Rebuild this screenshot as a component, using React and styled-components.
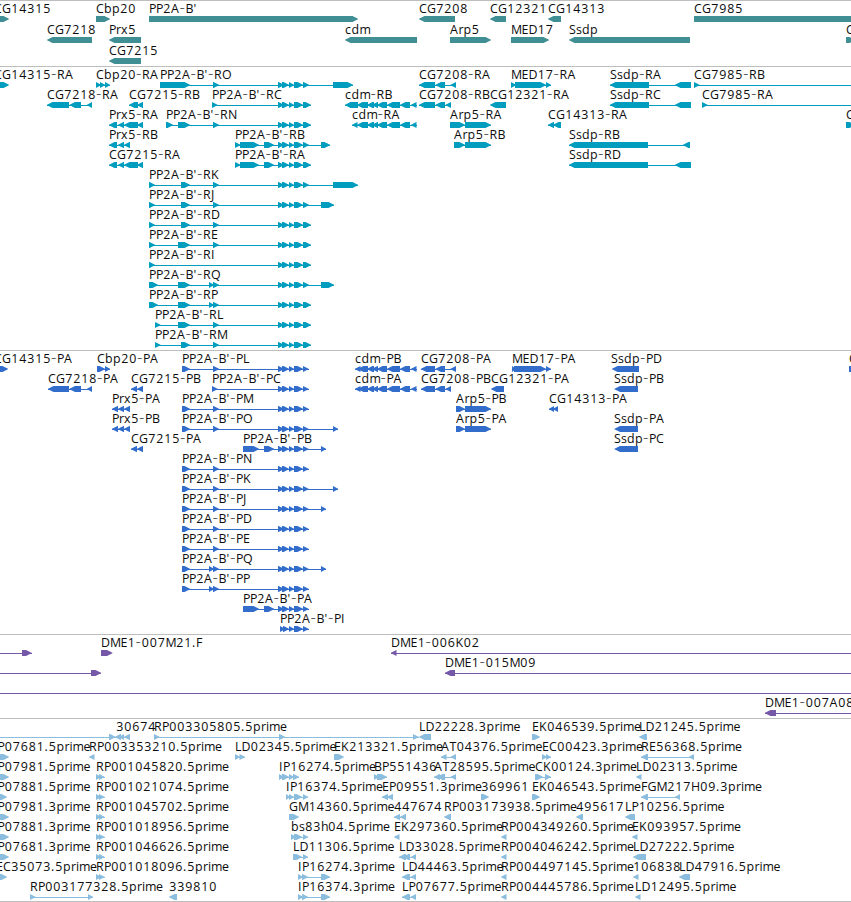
import React from "react";
import styled, { createGlobalStyle } from "styled-components";

const GlobalStyle = createGlobalStyle`
  html, body { margin: 0; padding: 0; background: #fff; }
  body { overflow: hidden; }
`;

const Browser = styled.main`
  display: flex;
  flex-direction: column;
  width: 851px;
  height: 902px;
  overflow: hidden;
  background: #fff;
`;

const Track = styled.section`
  display: flex;
  flex-direction: column;
  flex: none;
  box-sizing: border-box;
  border-top: 1px solid #bebebe;
  padding: 2px 0 ${(p) => p.$gap || 0}px;
  color: ${(p) => p.$color};
`;

const EndRule = styled.hr`
  flex: none;
  width: 100%;
  height: 1px;
  margin: 0;
  border: 0;
  background: #bebebe;
`;

const Lane = styled.svg`
  display: block;
  flex: none;
  width: 851px;
  height: ${(p) => p.$height}px;
  overflow: visible;
`;

const Label = styled.text`
  font-family: "Open Sans", "Noto Sans", sans-serif;
  font-size: 12.4px;
  font-weight: 400;
  fill: #0c0c0c;
  white-space: pre;
`;

const Dash = styled.tspan`
  font-family: "DejaVu Sans", sans-serif;
  font-size: 15px;
  font-weight: 200;
`;

const Exon = styled.polygon`
  fill: currentColor;
`;

const Intron = styled.rect`
  fill: currentColor;
  shape-rendering: crispEdges;
`;

// Advance of each character on the label grid; digits are 8px wide.
const ADVANCE = {
  A: 8.5, B: 8, C: 8, D: 9, E: 7, F: 6.5, G: 9, H: 9, I: 4, J: 4, K: 8, L: 6.5, M: 10.5,
  N: 9, O: 10, P: 7, Q: 10, R: 8, S: 7, T: 7,
  a: 7, b: 8, c: 6.5, d: 8, e: 7, h: 7, i: 3, m: 11, p: 8, r: 5, s: 6, x: 7,
  ".": 4, "-": 6, "'": 3.5,
};

const glyphPositions = (text, start) => {
  let x = start;
  return Array.from(text, (ch) => {
    const here = /[0-9]/.test(ch) ? x + 0.3 : x;
    x += ADVANCE[ch] || 8;
    return here;
  }).join(" ");
};

const exonPoints = ([a, b], dir) => {
  const t = Math.min(5.5, b - a);
  return dir === "R"
    ? `${a},13 ${b - t},13 ${b},15.7 ${b},16.3 ${b - t},19 ${a},19`
    : `${b},13 ${a + t},13 ${a},15.7 ${a},16.3 ${a + t},19 ${b},19`;
};

const Feature = ({ label, x, dir, exons, from, to }) => {
  const a = from ?? (exons.length ? exons[0][0] : 0);
  const b = to ?? (exons.length ? exons[exons.length - 1][1] : 0);
  return (
    <g>
      {(exons.length > 1 || from !== undefined || to !== undefined) && (
        <Intron x={a} y={16} width={b - a} height={1} />
      )}
      {exons.map((e, i) => (
        <Exon key={i} points={exonPoints(e, dir)} />
      ))}
      {label && (
        <Label x={glyphPositions(label, x)} y={10}>
          {label.split(/(-)/).map((part, i) => (part === "-" ? <Dash key={i}>-</Dash> : part))}
        </Label>
      )}
    </g>
  );
};

const f = (label, x, dir, exons, span = {}) => ({ label, x, dir, exons, ...span });
const R = (label, x, ...exons) => f(label, x, "R", exons.length ? exons : [[x, x + 6]]);
const L = (label, x, ...exons) => f(label, x, "L", exons);
const EDGE = 860;

const genes = [
  [R("CG14315", -6, [-10, 9]), R("Cbp20", 96, [96, 110]), R("PP2A-B'", 149, [149, 358]),
    L("CG7208", 419, [419, 455]), L("CG12321", 490, [490, 506]), L("CG14313", 548, [548, 561]),
    R("CG7985", 694, [694, 870])],
  [L("CG7218", 47, [47, 92]), L("Prx5", 109, [109, 141]), L("cdm", 345, [345, 417]),
    R("Arp5", 450, [450, 491]), R("MED17", 511, [511, 549]), L("Ssdp", 569, [569, 690]),
    R("C", 846, [846, 855])],
  [L("CG7215", 109, [109, 141])],
];

const K = [[278, 284], [282, 289], [289, 294], [294, 303]];
const U = [...K, [303, 311]];
const UL = [...K, [303, 309]];
const START = [149, 155];
const MID = [213, 219];
const CDM = [[357, 368], [367, 374], [372, 378], [377, 387], [387, 400], [400, 410], [411, 416.5]];

const transcripts = [
  [R("CG14315-RA", -6, [-10, 9]), R("Cbp20-RA", 96, [96, 101], [100, 105], [105, 110]),
    R("PP2A-B'-RO", 160, [160, 190], MID, ...UL, [333, 353]),
    L("CG7208-RA", 419, [419, 435], [435.5, 445], [450.5, 456]),
    R("MED17-RA", 511, [511, 516], [515, 546], [546, 551]),
    L("Ssdp-RA", 610, [610, 649], [675, 691]),
    f("CG7985-RB", 694, "R", [[694, 699.5]], { to: EDGE })],
  [L("CG7218-RA", 47, [47, 69], [69.5, 81], [87, 92]), L("CG7215-RB", 129, [129, 138], [137, 143]),
    R("PP2A-B'-RC", 212, [212, 217.5], ...U), L("cdm-RB", 345, [345, 358], ...CDM),
    L("CG7208-RB", 419, [419, 435], [435.5, 445], [445.5, 451]), L("CG12321-RA", 490, [490, 506]),
    L("Ssdp-RC", 610, [610, 649], [675, 691]),
    f("CG7985-RA", 702, "R", [[702, 707.5]], { to: EDGE })],
  [L("Prx5-RA", 109, [109, 117], [118, 124], [124, 138], [137, 143]),
    R("PP2A-B'-RN", 166, [166, 173], [178, 190], MID, ...U),
    L("cdm-RA", 352, [352, 357.5], ...CDM), R("Arp5-RA", 450, [450, 465], [465, 491]),
    L("CG14313-RA", 548, [548, 554], [553, 561]), R("C", 846, [846, 855])],
  [L("Prx5-RB", 109, [109, 117], [118, 124], [124, 130]),
    R("PP2A-B'-RB", 235, [235, 240.5], [240, 259], [264, 274], ...UL, [321, 330]),
    R("Arp5-RB", 454, [454, 465], [465, 491]), L("Ssdp-RB", 569, [569, 648], [683, 690])],
  [L("CG7215-RA", 109, [109, 117], [118, 124], [124, 138], [137, 143]),
    R("PP2A-B'-RA", 235, [235, 240.5], [240, 259], [264, 274], ...U),
    L("Ssdp-RD", 569, [569, 648], [675, 691])],
  [R("PP2A-B'-RK", 149, START, [181, 190], MID, ...UL, [333, 358])],
  [R("PP2A-B'-RJ", 149, START, [181, 190], MID, ...UL, [321, 334])],
  [R("PP2A-B'-RD", 149, START, [181, 190], MID, ...U)],
  [R("PP2A-B'-RE", 149, START, [178, 190], MID, ...U)],
  [R("PP2A-B'-RI", 149, START, ...U)],
  [R("PP2A-B'-RQ", 149, [149, 158], [178, 190], [209, 214], MID, ...UL, [321, 334])],
  [R("PP2A-B'-RP", 149, [149, 158], [178, 190], [209, 214], MID, ...U)],
  [R("PP2A-B'-RL", 155, [155, 160.5], [178, 190], MID, ...U)],
  [R("PP2A-B'-RM", 155, [155, 160.5], [181, 190], MID, ...U)],
];

const P = [...K, [303, 308.5]];
const PS = [182, 190];
const CDMP = [[355, 360.5], ...CDM.map((e, i) => (i ? e : [358, 368]))];

const proteins = [
  [R("CG14315-PA", -6, [-10, 8]), R("Cbp20-PA", 97, [97, 105], [105, 110]),
    R("PP2A-B'-PL", 182, PS, MID, ...P), L("cdm-PB", 355, ...CDMP),
    L("CG7208-PA", 421, [421, 435], [435.5, 445], [450.5, 456]),
    R("MED17-PA", 512, [512, 516], [514, 546], [546, 551]), L("Ssdp-PD", 611, [612, 639]),
    R("C", 849, [849, 860])],
  [L("CG7218-PA", 48, [48, 69], [69.5, 81], [87, 92]), L("CG7215-PB", 131, [131, 137], [137, 143]),
    R("PP2A-B'-PC", 212, [212, 217.5], ...P), L("cdm-PA", 355, ...CDMP),
    L("CG7208-PB", 421, [421, 435], [435.5, 445], [445.5, 451]), L("CG12321-PA", 491, [491, 504]),
    L("Ssdp-PB", 614, [614.5, 638])],
  [L("Prx5-PA", 112, [112, 118], [118, 124], [124, 130]), R("PP2A-B'-PM", 182, PS, MID, ...P),
    R("Arp5-PB", 456, [456, 465], [465, 491]), L("CG14313-PA", 549, [549, 554], [553, 558])],
  [L("Prx5-PB", 112, [112, 118], [118, 124], [124, 130]),
    R("PP2A-B'-PO", 182, PS, MID, ...P, [333, 338]),
    R("Arp5-PA", 456, [456, 465], [465, 491]), L("Ssdp-PA", 614, [614.5, 638])],
  [L("CG7215-PA", 131, [131, 137], [137, 143]),
    R("PP2A-B'-PB", 243, [243, 259], [264, 274], ...P, [321, 326]), L("Ssdp-PC", 614, [614.5, 638])],
  [R("PP2A-B'-PN", 182, PS, MID, ...P)],
  [R("PP2A-B'-PK", 182, PS, MID, ...P, [333, 338])],
  [R("PP2A-B'-PJ", 182, PS, MID, ...P, [321, 326])],
  [R("PP2A-B'-PD", 182, PS, MID, ...P)],
  [R("PP2A-B'-PE", 182, PS, MID, ...P)],
  [R("PP2A-B'-PQ", 182, PS, [209, 214], MID, ...P, [321, 326])],
  [R("PP2A-B'-PP", 182, PS, [209, 214], MID, ...P)],
  [R("PP2A-B'-PA", 243, [243, 259], [264, 274], ...P)],
  [R("PP2A-B'-PI", 280, [280, 285], [283, 289], ...P.slice(2))],
];

const clones = [
  [f("", 0, "R", [[22, 31.5]], { from: 0 }), R("DME1-007M21.F", 101, [101, 112.5]),
    f("DME1-006K02", 391, "L", [[391, 396.5]], { to: EDGE })],
  [f("", 0, "R", [[91, 101]], { from: 0 }), f("DME1-015M09", 445, "L", [[445, 455]], { to: EDGE })],
  [f("", 0, "R", [], { from: 0, to: EDGE })],
  [f("DME1-007A08", 765, "L", [[765, 776]], { to: EDGE })],
];

const rp = (name) => R(name, 96, [96, 101], [99, 104.5]);
const one = (name, x) => L(name, x, [x, x + 5.5]);

const ests = [
  [f("", 0, "R", [[109, 115.5]], { from: 0 }), L("30674", 116, [115, 121], [119, 124], [124, 130]),
    R("RP003305805.5prime", 154, [154, 159.5], [279, 285], [413, 418.5]),
    L("LD22228.3prime", 419, [419, 431]), R("EK046539.5prime", 532, [532, 540]),
    L("LD21245.5prime", 639, [639, 647])],
  [R("P07681.5prime", -2.5, [-5, 9]), one("RP003353210.5prime", 89),
    R("LD02345.5prime", 235, [235, 240], [239.5, 245]), R("EK213321.5prime", 334, [334, 344]),
    L("AT04376.5prime", 441, [441, 446.5], [450.5, 456]),
    R("EC00423.3prime", 542, [542, 547], [546, 551]), L("RE56368.5prime", 641, [641, 648], [689, 694])],
  [R("P07981.5prime", -2.5, [-5, 9]), rp("RP001045820.5prime"),
    R("IP16274.5prime", 279, [279, 284], [282, 289], [289, 294], [293, 299]),
    R("BP551436", 374, [374, 379], [377, 387]), L("AT28595.5prime", 434, [434, 440], [437, 445], [450.5, 456]),
    R("CK00124.3prime", 535, [535, 543], [545, 551]), one("LD02313.5prime", 636)],
  [R("P07881.5prime", -2.5, [-5, 7]), rp("RP001021074.5prime"),
    R("IP16374.5prime", 286, [286, 290], [289, 294], [294, 302], [303, 308]),
    L("EP09551.3prime", 382, [382, 388], [387, 393]), R("369961", 481, [481, 489]),
    R("EK046543.5prime", 532, [532, 540]), L("FGM217H09.3prime", 641, [641, 648], [675, 680])],
  [R("P07981.3prime", -2.5, [-5, 9]), rp("RP001045702.5prime"), R("GM14360.5prime", 289, [289, 299]),
    L("447674", 394, [394, 400], [400, 406]), L("RP003173938.5prime", 444, [444, 451]),
    L("495617", 576, [576, 583]), L("LP10256.5prime", 625, [625, 635])],
  [R("P07881.3prime", -2.5, [-5, 9]), rp("RP001018956.5prime"),
    R("bs83h04.5prime", 291, [291, 296], [294, 302], [303, 308]), one("EK297360.5prime", 394),
    one("RP004349260.5prime", 501), one("EK093957.5prime", 632)],
  [R("P07681.3prime", -2.5, [-5, 9]), rp("RP001046626.5prime"),
    R("LD11306.5prime", 293, [293, 302], [303, 308]),
    L("LD33028.5prime", 399, [399, 406], [403, 410], [411, 416]), one("RP004046242.5prime", 501),
    L("LD27222.5prime", 633, [633, 646])],
  [R("EC35073.5prime", -4, [-5, 7]), rp("RP001018096.5prime"),
    R("IP16274.3prime", 298, [298, 303], [302, 308], [321, 330]),
    L("LD44463.5prime", 402, [402, 410], [410.5, 416]), one("RP004497145.5prime", 501),
    one("106838", 633), L("LD47916.5prime", 679, [679, 690])],
  [R("RP003177328.5prime", 30, [30, 35.5], [88, 93]), L("339810", 169, [169, 177]),
    R("IP16374.3prime", 298, [298, 303], [302, 308], [321, 330]),
    L("LP07677.5prime", 402, [402, 410], [410.5, 416]), one("RP004445786.5prime", 501),
    one("LD12495.5prime", 635)],
];

const tracks = [
  { id: "genes", color: "#408f94", rows: genes, pitch: 21 },
  { id: "transcripts", color: "#009dbf", rows: transcripts, pitch: 20, gap: 1 },
  { id: "proteins", color: "#326dcc", rows: proteins, pitch: 20, gap: 1 },
  { id: "clones", color: "#7558a8", rows: clones, pitch: 20, gap: 1 },
  { id: "ests", color: "#8bbede", rows: ests, pitch: 20 },
];

export default function App() {
  return (
    <Browser>
      <GlobalStyle />
      {tracks.map((t) => (
        <Track key={t.id} $color={t.color} $gap={t.gap}>
          {t.rows.map((row, i) => (
            <Lane key={i} $height={t.pitch}>
              {row.map((feature, j) => (
                <Feature key={j} {...feature} />
              ))}
            </Lane>
          ))}
        </Track>
      ))}
      <EndRule />
    </Browser>
  );
}
